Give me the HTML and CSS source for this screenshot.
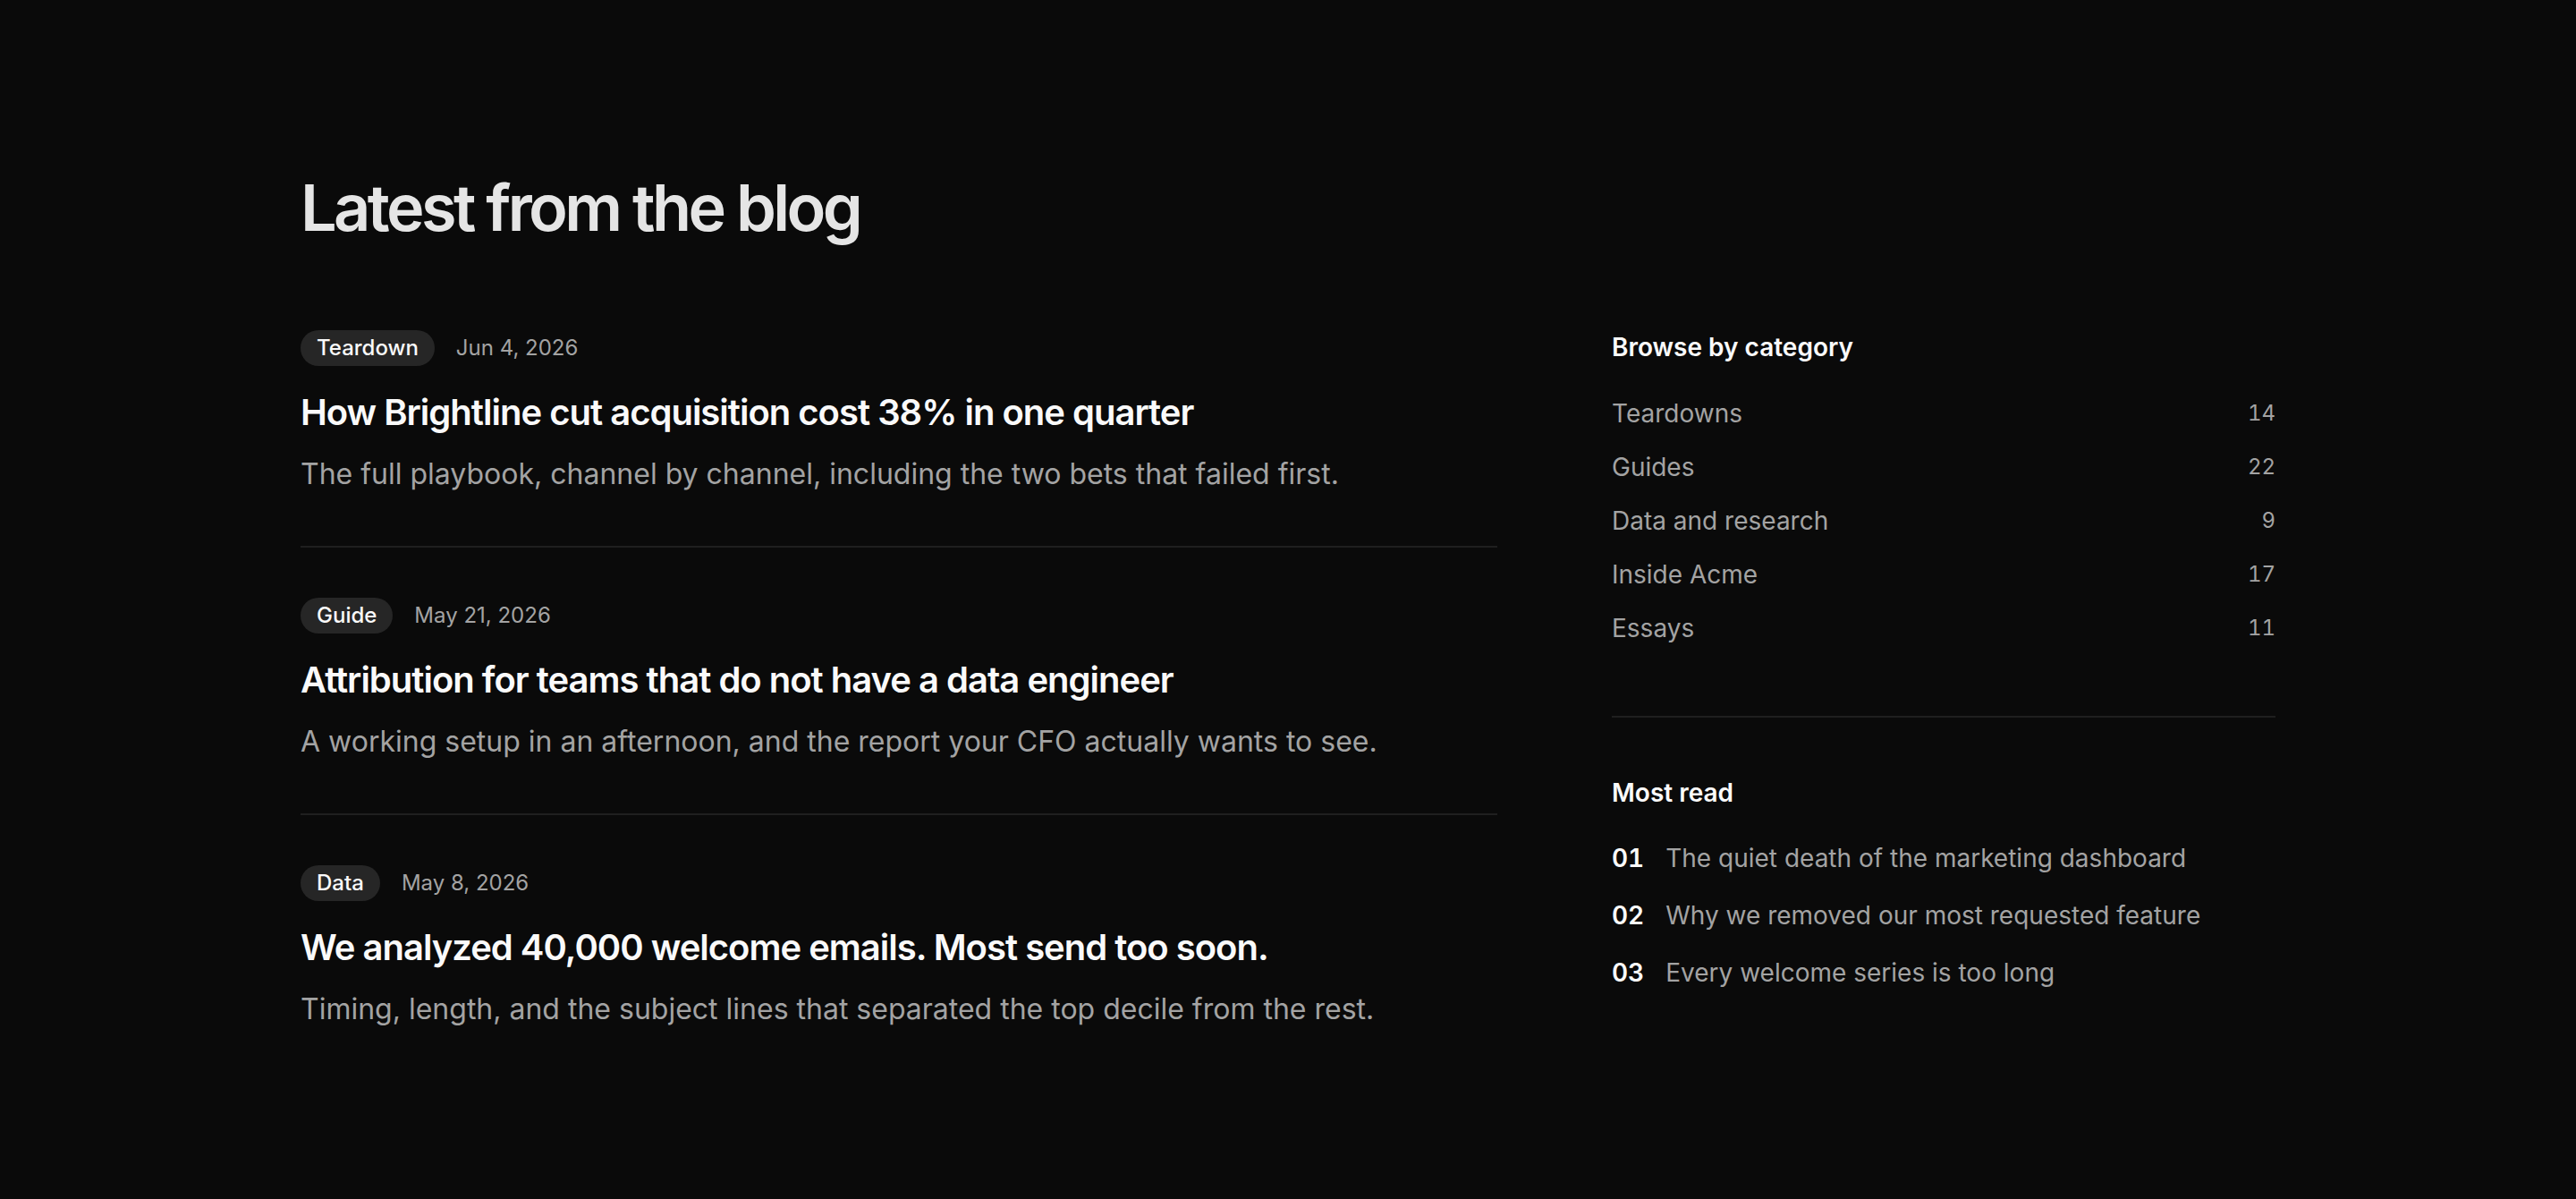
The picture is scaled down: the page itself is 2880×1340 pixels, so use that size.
FILE: index.html
```html
<!DOCTYPE html>
<html lang="en">
<head>
<meta charset="utf-8">
<title>Latest from the blog</title>
<link rel="stylesheet" href="styles.css">
</head>
<body>
<main class="page">
  <h1 class="page-title">Latest from the blog</h1>
  <div class="layout">
    <section class="posts">
      <article class="post">
        <div class="post-meta"><span class="tag">Teardown</span><time class="date">Jun 4, 2026</time></div>
        <h2 class="post-title">How Brightline cut acquisition cost 38% in one quarter</h2>
        <p class="post-desc">The full playbook, channel by channel, including the two bets that failed first.</p>
      </article>
      <article class="post">
        <div class="post-meta"><span class="tag">Guide</span><time class="date">May 21, 2026</time></div>
        <h2 class="post-title">Attribution for teams that do not have a data engineer</h2>
        <p class="post-desc">A working setup in an afternoon, and the report your CFO actually wants to see.</p>
      </article>
      <article class="post">
        <div class="post-meta"><span class="tag">Data</span><time class="date">May 8, 2026</time></div>
        <h2 class="post-title">We analyzed 40,000 welcome emails. Most send too soon.</h2>
        <p class="post-desc">Timing, length, and the subject lines that separated the top decile from the rest.</p>
      </article>
    </section>
    <aside class="sidebar">
      <section class="side-block side-block--categories">
        <h3 class="side-title">Browse by category</h3>
        <ul class="cat-list">
          <li class="cat"><span class="cat-name">Teardowns</span><span class="cat-count">14</span></li>
          <li class="cat"><span class="cat-name">Guides</span><span class="cat-count">22</span></li>
          <li class="cat"><span class="cat-name">Data and research</span><span class="cat-count">9</span></li>
          <li class="cat"><span class="cat-name">Inside Acme</span><span class="cat-count">17</span></li>
          <li class="cat"><span class="cat-name">Essays</span><span class="cat-count">11</span></li>
        </ul>
      </section>
      <section class="side-block side-block--popular">
        <h3 class="side-title">Most read</h3>
        <ol class="pop-list">
          <li class="pop"><span class="pop-num">01</span><span class="pop-text">The quiet death of the marketing dashboard</span></li>
          <li class="pop"><span class="pop-num">02</span><span class="pop-text">Why we removed our most requested feature</span></li>
          <li class="pop"><span class="pop-num">03</span><span class="pop-text">Every welcome series is too long</span></li>
        </ol>
      </section>
    </aside>
  </div>
</main>
</body>
</html>
```

FILE: styles.css
```css
* { box-sizing: border-box; }

html, body {
  margin: 0;
  padding: 0;
  background: #0a0a0a;
}

body {
  font-family: Inter, "Noto Sans", "Liberation Sans", sans-serif;
  color: #fafafa;
  min-height: 100vh;
}

.page {
  max-width: 2304px;
  margin: 0 auto;
  padding: 192px 48px 192px;
}

.page-title {
  margin: 0 0 96px;
  font-size: 72px;
  line-height: 80px;
  font-weight: 600;
  letter-spacing: -0.05em;
  color: #e5e5e5;
}

.layout {
  display: grid;
  grid-template-columns: minmax(0, 1fr) 742px;
  column-gap: 128px;
  align-items: start;
}

.posts {
  padding-top: 1px;
}

.post {
  padding: 56px 0;
  border-bottom: 2px solid #1f1f1f;
}

.post:first-child { padding-top: 0; }
.post:last-child { border-bottom: none; }

.post-meta {
  display: flex;
  align-items: center;
  gap: 24px;
  height: 40px;
}

.tag {
  display: inline-flex;
  align-items: center;
  height: 40px;
  padding: 0 18px;
  border-radius: 999px;
  background: #262626;
  color: #fafafa;
  font-size: 24px;
  font-weight: 500;
  line-height: 32px;
}

.date {
  font-size: 24px;
  line-height: 32px;
  color: #a3a3a3;
}

.post-title {
  margin: 24px 0 0;
  font-size: 40px;
  line-height: 56px;
  font-weight: 600;
  letter-spacing: -0.025em;
  color: #fafafa;
}

.post-desc {
  margin: 17px 0 0;
  font-size: 32px;
  line-height: 48px;
  color: #a3a3a3;
}

.side-block--categories {
  padding-bottom: 68px;
  border-bottom: 2px solid #1f1f1f;
}

.side-block--popular {
  padding-top: 64px;
}

.side-title {
  margin: 0;
  font-size: 28px;
  line-height: 40px;
  font-weight: 600;
  color: #fafafa;
}

.cat-list, .pop-list {
  list-style: none;
  margin: 24px 0 0;
  padding: 0;
}

.cat {
  display: flex;
  justify-content: space-between;
  align-items: center;
  padding: 8px 0;
  line-height: 44px;
}

.cat-name {
  font-size: 28px;
  color: #a3a3a3;
}

.cat-count {
  font-size: 24px;
  color: #a3a3a3;
  font-variant-numeric: tabular-nums;
}

.pop-list { margin-top: 21px; }

.pop {
  display: flex;
  align-items: baseline;
  gap: 24px;
  padding: 8px 0;
  line-height: 48px;
  font-size: 28px;
}

.pop-num {
  min-width: 36px;
  font-weight: 600;
  color: #fafafa;
  font-variant-numeric: tabular-nums;
}

.pop-text {
  color: #a3a3a3;
}
```
